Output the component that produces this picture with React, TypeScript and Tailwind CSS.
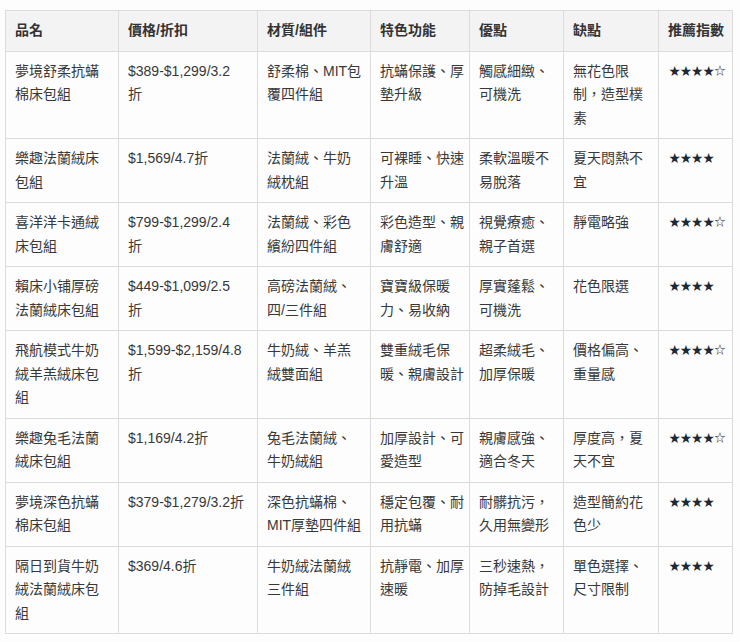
const headers = ['品名', '價格/折扣', '材質/組件', '特色功能', '優點', '缺點', '推薦指數'];

const colWidths = ['w-[113px]', 'w-[139px]', 'w-[113px]', 'w-[99px]', 'w-[94px]', 'w-[95px]', 'w-[74px]'];

// each cell is a list of its visual lines
const rows: string[][][] = [
  [
    ['夢境舒柔抗蟎', '棉床包組'],
    ['$389-$1,299/3.2', '折'],
    ['舒柔棉、MIT包', '覆四件組'],
    ['抗蟎保護、厚', '墊升級'],
    ['觸感細緻、', '可機洗'],
    ['無花色限', '制，造型樸', '素'],
    ['★★★★☆'],
  ],
  [
    ['樂趣法蘭絨床', '包組'],
    ['$1,569/4.7折'],
    ['法蘭絨、牛奶', '絨枕組'],
    ['可裸睡、快速', '升溫'],
    ['柔軟溫暖不', '易脫落'],
    ['夏天悶熱不', '宜'],
    ['★★★★'],
  ],
  [
    ['喜洋洋卡通絨', '床包組'],
    ['$799-$1,299/2.4', '折'],
    ['法蘭絨、彩色', '繽紛四件組'],
    ['彩色造型、親', '膚舒適'],
    ['視覺療癒、', '親子首選'],
    ['靜電略強'],
    ['★★★★☆'],
  ],
  [
    ['賴床小铺厚磅', '法蘭絨床包組'],
    ['$449-$1,099/2.5', '折'],
    ['高磅法蘭絨、', '四/三件組'],
    ['寶寶級保暖', '力、易收納'],
    ['厚實蓬鬆、', '可機洗'],
    ['花色限選'],
    ['★★★★'],
  ],
  [
    ['飛航模式牛奶', '絨羊羔絨床包', '組'],
    ['$1,599-$2,159/4.8', '折'],
    ['牛奶絨、羊羔', '絨雙面組'],
    ['雙重絨毛保', '暖、親膚設計'],
    ['超柔絨毛、', '加厚保暖'],
    ['價格偏高、', '重量感'],
    ['★★★★☆'],
  ],
  [
    ['樂趣兔毛法蘭', '絨床包組'],
    ['$1,169/4.2折'],
    ['兔毛法蘭絨、', '牛奶絨組'],
    ['加厚設計、可', '愛造型'],
    ['親膚感強、', '適合冬天'],
    ['厚度高，夏', '天不宜'],
    ['★★★★☆'],
  ],
  [
    ['夢境深色抗蟎', '棉床包組'],
    ['$379-$1,279/3.2折'],
    ['深色抗蟎棉、', 'MIT厚墊四件組'],
    ['穩定包覆、耐', '用抗蟎'],
    ['耐髒抗污，', '久用無變形'],
    ['造型簡約花', '色少'],
    ['★★★★'],
  ],
  [
    ['隔日到貨牛奶', '絨法蘭絨床包', '組'],
    ['$369/4.6折'],
    ['牛奶絨法蘭絨', '三件組'],
    ['抗靜電、加厚', '速暖'],
    ['三秒速熱，', '防掉毛設計'],
    ['單色選擇、', '尺寸限制'],
    ['★★★★'],
  ],
];

const App = () => {
  return (
    <div className="min-h-[642px] bg-[#fdfdfd] pt-[10px] pl-[5px] font-['Liberation_Sans','Noto_Sans_CJK_TC',sans-serif] text-[14px] leading-[23.5px] text-[#383838]">
      <table className="w-[727px] table-fixed border-collapse">
        <colgroup>
          {colWidths.map((w, i) => (
            <col key={i} className={w} />
          ))}
        </colgroup>
        <thead>
          <tr className="bg-[#f3f3f3]">
            {headers.map((h) => (
              <th
                key={h}
                className="border border-[#dcdcdc] px-[9px] py-2 text-left align-top font-bold whitespace-nowrap text-[#333]"
              >
                {h}
              </th>
            ))}
          </tr>
        </thead>
        <tbody>
          {rows.map((row, r) => (
            <tr key={r}>
              {row.map((lines, c) => (
                <td
                  key={c}
                  className="border border-[#dcdcdc] px-[9px] py-2 align-top whitespace-nowrap"
                >
                  {lines.map((line, i) =>
                    c === 6 ? (
                      <div key={i} className="pl-px text-[11.3px] text-[#1d2a36]">
                        {line}
                      </div>
                    ) : (
                      <div key={i}>{line}</div>
                    )
                  )}
                </td>
              ))}
            </tr>
          ))}
        </tbody>
      </table>
    </div>
  );
};

export default App;
